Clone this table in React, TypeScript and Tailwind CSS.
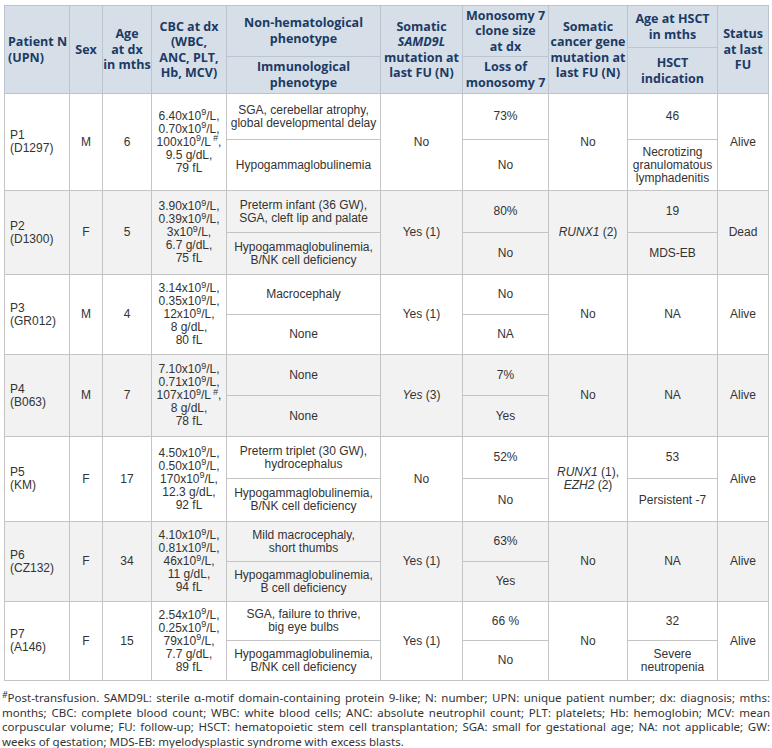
import React from "react";

type Patient = {
  id: string;
  upn: string;
  sex: string;
  age: string;
  cbc: React.ReactNode[];
  nonHema: React.ReactNode;
  immuno: React.ReactNode;
  samd9l: React.ReactNode;
  clone: string;
  loss: string;
  cancer: React.ReactNode;
  hsctAge: string;
  indication?: React.ReactNode;
  status: string;
  shaded: boolean;
  heights: [string, string];
};

const g = (v: string, hash = false) => (
  <>
    {v}x10<sup>9</sup>/L{hash ? <sup className="ml-[2px] italic">#</sup> : null},
  </>
);

const patients: Patient[] = [
  {
    id: "P1",
    upn: "D1297",
    sex: "M",
    age: "6",
    cbc: [g("6.40"), g("0.70"), g("100", true), "9.5 g/dL,", "79 fL"],
    nonHema: <>SGA, cerebellar atrophy,<br />global developmental delay</>,
    immuno: "Hypogammaglobulinemia",
    samd9l: "No",
    clone: "73%",
    loss: "No",
    cancer: "No",
    hsctAge: "46",
    indication: <>Necrotizing<br />granulomatous<br />lymphadenitis</>,
    status: "Alive",
    shaded: false,
    heights: ["h-[46px]", "h-[51px]"],
  },
  {
    id: "P2",
    upn: "D1300",
    sex: "F",
    age: "5",
    cbc: [g("3.90"), g("0.39"), g("3"), "6.7 g/dL,", "75 fL"],
    nonHema: <>Preterm infant (36 GW),<br />SGA, cleft lip and palate</>,
    immuno: <>Hypogammaglobulinemia,<br />B/NK cell deficiency</>,
    samd9l: "Yes (1)",
    clone: "80%",
    loss: "No",
    cancer: <><i>RUNX1</i> (2)</>,
    hsctAge: "19",
    indication: "MDS-EB",
    status: "Dead",
    shaded: true,
    heights: ["h-[42px]", "h-[42px]"],
  },
  {
    id: "P3",
    upn: "GR012",
    sex: "M",
    age: "4",
    cbc: [g("3.14"), g("0.35"), g("12"), "8 g/dL,", "80 fL"],
    nonHema: "Macrocephaly",
    immuno: "None",
    samd9l: "Yes (1)",
    clone: "No",
    loss: "NA",
    cancer: "No",
    hsctAge: "NA",
    status: "Alive",
    shaded: false,
    heights: ["h-[40px]", "h-[40px]"],
  },
  {
    id: "P4",
    upn: "B063",
    sex: "M",
    age: "7",
    cbc: [g("7.10"), g("0.71"), g("107", true), "8 g/dL,", "78 fL"],
    nonHema: "None",
    immuno: "None",
    samd9l: <><i>Yes</i> (3)</>,
    clone: "7%",
    loss: "Yes",
    cancer: "No",
    hsctAge: "NA",
    status: "Alive",
    shaded: true,
    heights: ["h-[41px]", "h-[41px]"],
  },
  {
    id: "P5",
    upn: "KM",
    sex: "F",
    age: "17",
    cbc: [g("4.50"), g("0.50"), g("170"), "12.3 g/dL,", "92 fL"],
    nonHema: <>Preterm triplet (30 GW),<br />hydrocephalus</>,
    immuno: <>Hypogammaglobulinemia,<br />B/NK cell deficiency</>,
    samd9l: "No",
    clone: "52%",
    loss: "No",
    cancer: <><i>RUNX1</i> (1),<br /><i>EZH2</i> (2)</>,
    hsctAge: "53",
    indication: "Persistent -7",
    status: "Alive",
    shaded: false,
    heights: ["h-[42px]", "h-[43px]"],
  },
  {
    id: "P6",
    upn: "CZ132",
    sex: "F",
    age: "34",
    cbc: [g("4.10"), g("0.81"), g("46"), "11 g/dL,", "94 fL"],
    nonHema: <>Mild macrocephaly,<br />short thumbs</>,
    immuno: <>Hypogammaglobulinemia,<br />B cell deficiency</>,
    samd9l: "Yes (1)",
    clone: "63%",
    loss: "Yes",
    cancer: "No",
    hsctAge: "NA",
    status: "Alive",
    shaded: true,
    heights: ["h-[40px]", "h-[40px]"],
  },
  {
    id: "P7",
    upn: "A146",
    sex: "F",
    age: "15",
    cbc: [g("2.54"), g("0.25"), g("79"), "7.7 g/dL,", "89 fL"],
    nonHema: <>SGA, failure to thrive,<br />big eye bulbs</>,
    immuno: <>Hypogammaglobulinemia,<br />B/NK cell deficiency</>,
    samd9l: "Yes (1)",
    clone: "66 %",
    loss: "No",
    cancer: "No",
    hsctAge: "32",
    indication: <>Severe<br />neutropenia</>,
    status: "Alive",
    shaded: false,
    heights: ["h-[39px]", "h-[40px]"],
  },
];

const th = "whitespace-nowrap border border-[#bcc5cf] px-0 py-0 align-middle text-center font-bold";
const td = "whitespace-nowrap border border-[#c4c4c4] px-[2px] py-0 align-middle text-center";

const App = () => {
  return (
    <div className="w-[772px] min-h-[748px] bg-white pt-[5px]">
      <table
        className="ml-[4px] w-[764px] table-fixed border-collapse text-[12px] leading-[13px] text-[#333]"
        style={{ fontFamily: '"Liberation Sans", Arial, sans-serif' }}
      >
        <colgroup>
          <col className="w-[65px]" />
          <col className="w-[33px]" />
          <col className="w-[49px]" />
          <col className="w-[75px]" />
          <col className="w-[154px]" />
          <col className="w-[82px]" />
          <col className="w-[86px]" />
          <col className="w-[79px]" />
          <col className="w-[90px]" />
          <col className="w-[51px]" />
        </colgroup>
        <thead
          className="bg-[#d6dfe8] text-[12.5px] leading-[15.5px] text-[#1c3a64]"
          style={{ fontFamily: '"Open Sans", "Noto Sans", sans-serif' }}
        >
          <tr className="h-[50px]">
            <th rowSpan={2} className={`${th} pl-[3px] text-left`}>
              Patient N<br />(UPN)
            </th>
            <th rowSpan={2} className={th}>Sex</th>
            <th rowSpan={2} className={th}>Age<br />at dx<br />in mths</th>
            <th rowSpan={2} className={th}>CBC at dx<br />(WBC,<br />ANC, PLT,<br />Hb, MCV)</th>
            <th className={`${th} h-[50px]`}>Non-hematological<br />phenotype</th>
            <th rowSpan={2} className={th}>
              Somatic<br /><i>SAMD9L</i><br />mutation at<br />last FU (N)
            </th>
            <th className={th}>Monosomy 7<br />clone size<br />at dx</th>
            <th rowSpan={2} className={th}>
              Somatic<br />cancer gene<br />mutation at<br />last FU (N)
            </th>
            <th rowSpan={2} className={`${th} p-0`}>
              <div className="flex h-[87px] flex-col">
                <div className="flex h-[42px] items-center justify-center border-b border-[#bcc5cf]">
                  Age at HSCT<br />in mths
                </div>
                <div className="flex flex-1 items-center justify-center">
                  HSCT<br />indication
                </div>
              </div>
            </th>
            <th rowSpan={2} className={th}>Status<br />at last<br />FU</th>
          </tr>
          <tr className="h-[37px]">
            <th className={`${th} h-[37px]`}>Immunological<br />phenotype</th>
            <th className={th}>Loss of<br />monosomy 7</th>
          </tr>
        </thead>
        <tbody>
          {patients.map((p) => {
            const bg = p.shaded ? "bg-[#f2f2f2]" : "bg-white";
            const split = p.indication !== undefined;
            return (
              <React.Fragment key={p.id}>
                <tr className={bg}>
                  <td rowSpan={2} className={`${td} pl-[5px] text-left`}>
                    {p.id}<br />({p.upn})
                  </td>
                  <td rowSpan={2} className={td}>{p.sex}</td>
                  <td rowSpan={2} className={td}>{p.age}</td>
                  <td rowSpan={2} className={td}>
                    {p.cbc.map((line, i) => (
                      <div key={i}>{line}</div>
                    ))}
                  </td>
                  <td className={`${td} ${p.heights[0]}`}>{p.nonHema}</td>
                  <td rowSpan={2} className={td}>{p.samd9l}</td>
                  <td className={td}>{p.clone}</td>
                  <td rowSpan={2} className={td}>{p.cancer}</td>
                  <td rowSpan={split ? 1 : 2} className={td}>{p.hsctAge}</td>
                  <td rowSpan={2} className={td}>{p.status}</td>
                </tr>
                <tr className={bg}>
                  <td className={`${td} ${p.heights[1]}`}>{p.immuno}</td>
                  <td className={td}>{p.loss}</td>
                  {split ? <td className={`${td} px-0`}>{p.indication}</td> : null}
                </tr>
              </React.Fragment>
            );
          })}
        </tbody>
      </table>
      <p
        className="mt-[10px] px-[2px] text-justify text-[11.5px] leading-[14.5px] text-[#333]"
        style={{ fontFamily: '"Noto Sans", sans-serif' }}
      >
        <sup className="italic">#</sup>Post-transfusion. SAMD9L: sterile α-motif domain-containing protein
        9-like; N: number; UPN: unique patient number; dx: diagnosis; mths: months; CBC: complete blood
        count; WBC: white blood cells; ANC: absolute neutrophil count; PLT: platelets; Hb: hemoglobin; MCV:
        mean corpuscular volume; FU: follow-up; HSCT: hematopoietic stem cell transplantation; SGA: small
        for gestational age; NA: not applicable; GW: weeks of gestation; MDS-EB: myelodysplastic syndrome
        with excess blasts.
      </p>
    </div>
  );
};

export default App;
